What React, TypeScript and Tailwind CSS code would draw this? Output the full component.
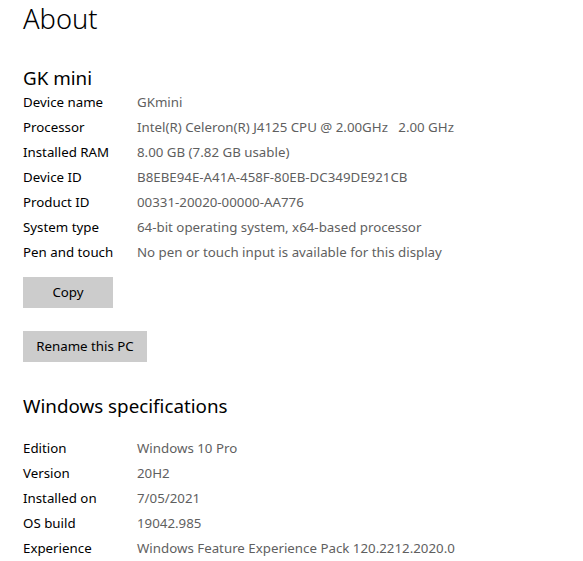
const PC_ROWS = [
  ["Device name", "GKmini"],
  ["Processor", "Intel(R) Celeron(R) J4125 CPU @ 2.00GHz   2.00 GHz"],
  ["Installed RAM", "8.00 GB (7.82 GB usable)"],
  ["Device ID", "B8EBE94E-A41A-458F-80EB-DC349DE921CB"],
  ["Product ID", "00331-20020-00000-AA776"],
  ["System type", "64-bit operating system, x64-based processor"],
  ["Pen and touch", "No pen or touch input is available for this display"],
];

const WIN_ROWS = [
  ["Edition", "Windows 10 Pro"],
  ["Version", "20H2"],
  ["Installed on", "7/05/2021"],
  ["OS build", "19042.985"],
  ["Experience", "Windows Feature Experience Pack 120.2212.2020.0"],
];

function InfoRows({ rows }: { rows: string[][] }) {
  return (
    <div className="flex flex-col">
      {rows.map(([label, value]) => (
        <div key={label} className="flex h-[25px] items-center text-[13.3px]">
          <span className="w-[114px] shrink-0 text-black">{label}</span>
          <span className="whitespace-pre text-[#5f5f5f]">{value}</span>
        </div>
      ))}
    </div>
  );
}

export default function App() {
  return (
    <div
      className="min-h-screen bg-white px-[23px] text-black"
      style={{ fontFamily: '"Noto Sans", "Open Sans", sans-serif' }}
    >
      <h1 className="text-[27.3px] font-light leading-[38px]">About</h1>
      <h2 className="mt-[29px] text-[18.8px] leading-[23px]">GK mini</h2>
      <InfoRows rows={PC_ROWS} />
      <button className="mt-[12px] flex h-[31px] w-[90px] items-center justify-center bg-[#cccccc] text-[13.3px]">
        Copy
      </button>
      <button className="mt-[23px] flex h-[31px] w-[124px] items-center justify-center bg-[#cccccc] text-[13.3px]">
        Rename this PC
      </button>
      <h2 className="mt-[33px] text-[18.8px] leading-[23px]">Windows specifications</h2>
      <div className="mt-[18px]">
        <InfoRows rows={WIN_ROWS} />
      </div>
    </div>
  );
}
